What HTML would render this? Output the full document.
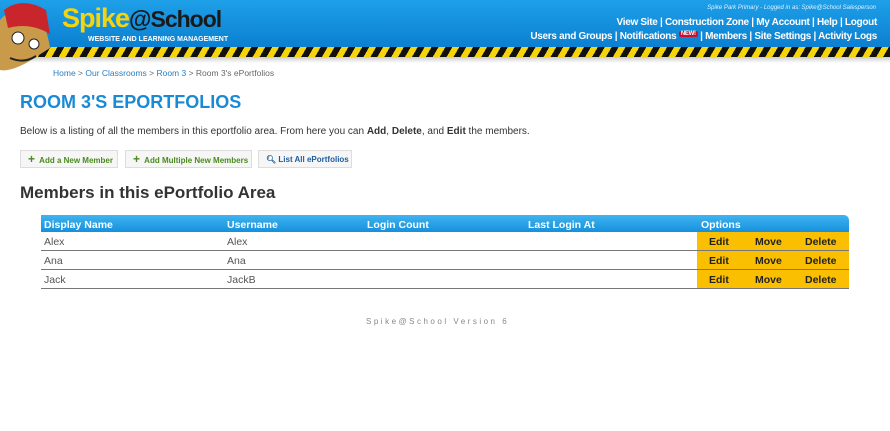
<!DOCTYPE html>
<html><head><meta charset="utf-8"><style>
body{margin:0;width:890px;height:431px;background:#fff;font-family:"Liberation Sans",sans-serif;position:relative;overflow:hidden}
.hdr{position:absolute;left:0;top:0;width:890px;height:48px;background:linear-gradient(#1ea0e8,#0b7fd0)}
.haz{position:absolute;left:0;top:47px;width:890px;height:10px;background:repeating-linear-gradient(-60deg,#111 0 6px,#f5d40c 6px 12px)}
.shad{position:absolute;left:0;top:57px;width:890px;height:6px;background:linear-gradient(rgba(0,0,0,.2),rgba(0,0,0,0))}
.t{position:absolute;white-space:nowrap}
.nav{right:13px;color:#fff;font-weight:bold;font-size:10px;letter-spacing:-0.3px}
.new{background:#c8102e;color:#fff;font-size:6px;padding:0 2px;border-radius:2px;vertical-align:top}
.btn{position:absolute;top:150px;height:18px;border:1px solid #ddd;background:#f6f6f6;font-size:8px;font-weight:bold;color:#4a8a1e;line-height:17px;box-sizing:border-box}
.tbl{position:absolute;left:41px;top:215px;width:808px}
.th{height:17px;background:linear-gradient(#40b4f0,#1590dc);border-radius:0 5px 0 0;color:#fff;font-weight:bold;font-size:10.5px;position:relative}
.row{height:18px;border-bottom:1px solid #777;position:relative;font-size:10.5px;color:#555}
.opt{position:absolute;left:656px;top:0;width:152px;height:18px;background:#f9bf00}
.row span,.th span{position:absolute;top:4px}
.opt span{color:#222;font-weight:bold;top:4px}
</style></head><body>
<div class="hdr"></div><div class="haz"></div><div class="shad"></div>
<svg class="t" style="left:0;top:0" width="60" height="80" viewBox="0 0 60 80">
<path d="M0 20 Q10 8 25 10 Q45 14 50 48 L28 62 Q10 72 0 70Z" fill="#c89a4a"/>
<path d="M4 10 Q22 -4 46 10 L50 34 Q30 22 8 28Z" fill="#c8262c"/>
<circle cx="18" cy="38" r="6" fill="#fff" stroke="#222"/><circle cx="34" cy="44" r="5" fill="#fff" stroke="#222"/>
<path d="M10 58 Q24 64 36 56" stroke="#222" fill="none" stroke-width="2"/></svg>
<div class="t" style="left:62px;top:3px;font-size:27px;font-weight:bold;color:#f5d40c;letter-spacing:-1px">Spike<span style="color:#1a1a1a;font-size:23px">@School</span></div>
<div class="t" style="left:88px;top:36px;font-size:7px;font-weight:bold;color:#fff">WEBSITE AND LEARNING MANAGEMENT</div>
<div class="t" style="right:14px;top:5px;font-size:6px;color:#e0f0ff;font-style:italic">Spike Park Primary - Logged in as: Spike@School Salesperson</div>
<div class="t nav" style="top:17px">View Site | Construction Zone | My Account | Help | Logout</div>
<div class="t nav" style="top:31px">Users and Groups | Notifications <span class="new">NEW!</span> | Members | Site Settings | Activity Logs</div>
<div class="t" style="left:53px;top:68px;font-size:8.5px;color:#666"><span style="color:#2a7ec0">Home</span> &gt; <span style="color:#2a7ec0">Our Classrooms</span> &gt; <span style="color:#2a7ec0">Room 3</span> &gt; Room 3's ePortfolios</div>
<div class="t" style="left:20px;top:92px;font-size:18px;font-weight:bold;color:#1a8ad4">ROOM 3'S EPORTFOLIOS</div>
<div class="t" style="left:20px;top:126px;font-size:10px;color:#333">Below is a listing of all the members in this eportfolio area. From here you can <b>Add</b>, <b>Delete</b>, and <b>Edit</b> the members.</div>
<div class="btn" style="left:20px;width:98px;padding-left:7px"><span style="font-size:12px">+</span>&nbsp; Add a New Member</div>
<div class="btn" style="left:125px;width:127px;padding-left:7px"><span style="font-size:12px">+</span>&nbsp; Add Multiple New Members</div>
<div class="btn" style="left:258px;width:94px;padding-left:7px;color:#1d5c9a">&#x1F50D;&#xFE0E; List All ePortfolios</div>
<div class="t" style="left:20px;top:183px;font-size:17px;font-weight:bold;color:#333">Members in this ePortfolio Area</div>
<div class="tbl">
<div class="th"><span style="left:3px">Display Name</span><span style="left:186px">Username</span><span style="left:326px">Login Count</span><span style="left:487px">Last Login At</span><span style="left:660px">Options</span></div>
<div class="row"><span style="left:3px">Alex</span><span style="left:186px">Alex</span><div class="opt"><span style="left:12px">Edit</span><span style="left:58px">Move</span><span style="left:108px">Delete</span></div></div>
<div class="row"><span style="left:3px">Ana</span><span style="left:186px">Ana</span><div class="opt"><span style="left:12px">Edit</span><span style="left:58px">Move</span><span style="left:108px">Delete</span></div></div>
<div class="row"><span style="left:3px">Jack</span><span style="left:186px">JackB</span><div class="opt"><span style="left:12px">Edit</span><span style="left:58px">Move</span><span style="left:108px">Delete</span></div></div>
</div>
<div class="t" style="left:366px;top:317px;font-size:8px;color:#888;letter-spacing:2.5px">Spike@School Version 6</div>
</body></html>
